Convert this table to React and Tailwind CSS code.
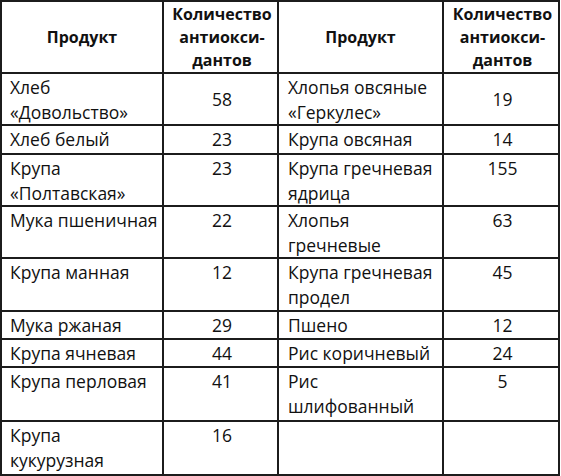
const rows = [
  { h: 'h-[50px]', a: ['Хлеб', '«Довольство»'], av: '58', b: ['Хлопья овсяные', '«Геркулес»'], bv: '19', center: true },
  { h: 'h-[27px]', a: ['Хлеб белый'], av: '23', b: ['Крупа овсяная'], bv: '14' },
  { h: 'h-[50px]', a: ['Крупа', '«Полтавская»'], av: '23', b: ['Крупа гречневая', 'ядрица'], bv: '155' },
  { h: 'h-[50px]', a: ['Мука пшеничная'], av: '22', b: ['Хлопья', 'гречневые'], bv: '63' },
  { h: 'h-[51px]', a: ['Крупа манная'], av: '12', b: ['Крупа гречневая', 'продел'], bv: '45' },
  { h: 'h-[26px]', a: ['Мука ржаная'], av: '29', b: ['Пшено'], bv: '12' },
  { h: 'h-[26px]', a: ['Крупа ячневая'], av: '44', b: ['Рис коричневый'], bv: '24' },
  { h: 'h-[52px]', a: ['Крупа перловая'], av: '41', b: ['Рис', 'шлифованный'], bv: '5' },
  { h: 'h-[52px]', a: ['Крупа', 'кукурузная'], av: '16', b: [], bv: '' },
];

function NameCell({ lines, h, pad, center }) {
  return (
    <div className={`${h} bg-white ${pad} pt-[1px] flex flex-col ${center ? 'justify-center' : ''}`}>
      {lines.map((l) => (
        <span key={l} className="leading-[25px] whitespace-nowrap">{l}</span>
      ))}
    </div>
  );
}

function ValueCell({ value, h, center }) {
  return (
    <div className={`${h} bg-white flex justify-center pt-[1px] pl-[3px] ${center ? 'items-center' : 'items-start'}`}>
      <span className="leading-[25px]">{value}</span>
    </div>
  );
}

function Header() {
  return (
    <>
      <div className="h-[70px] bg-white flex items-center justify-center font-bold text-[16px]">Продукт</div>
      <div className="h-[70px] bg-white flex flex-col items-center justify-center font-bold text-[16px] leading-[23px] pl-[3px]">
        <span>Количество</span>
        <span>антиокси-</span>
        <span>дантов</span>
      </div>
    </>
  );
}

export default function App() {
  return (
    <div className="w-[561px] h-[476px] bg-white">
      <div
        className="w-[560px] bg-[#1c1c1c] p-[2px] grid grid-cols-[160px_113px_163px_114px] gap-[2px] text-[17.5px] font-medium text-[#111]"
        style={{ fontFamily: '"Open Sans", "Liberation Sans", sans-serif' }}
      >
        <Header />
        <Header />
        {rows.map((r, i) => (
          <div key={i} className="contents">
            <NameCell lines={r.a} h={r.h} pad="pl-2" center={r.center} />
            <ValueCell value={r.av} h={r.h} center={r.center} />
            <NameCell lines={r.b} h={r.h} pad="pl-[9px]" center={r.center} />
            <ValueCell value={r.bv} h={r.h} center={r.center} />
          </div>
        ))}
      </div>
    </div>
  );
}
